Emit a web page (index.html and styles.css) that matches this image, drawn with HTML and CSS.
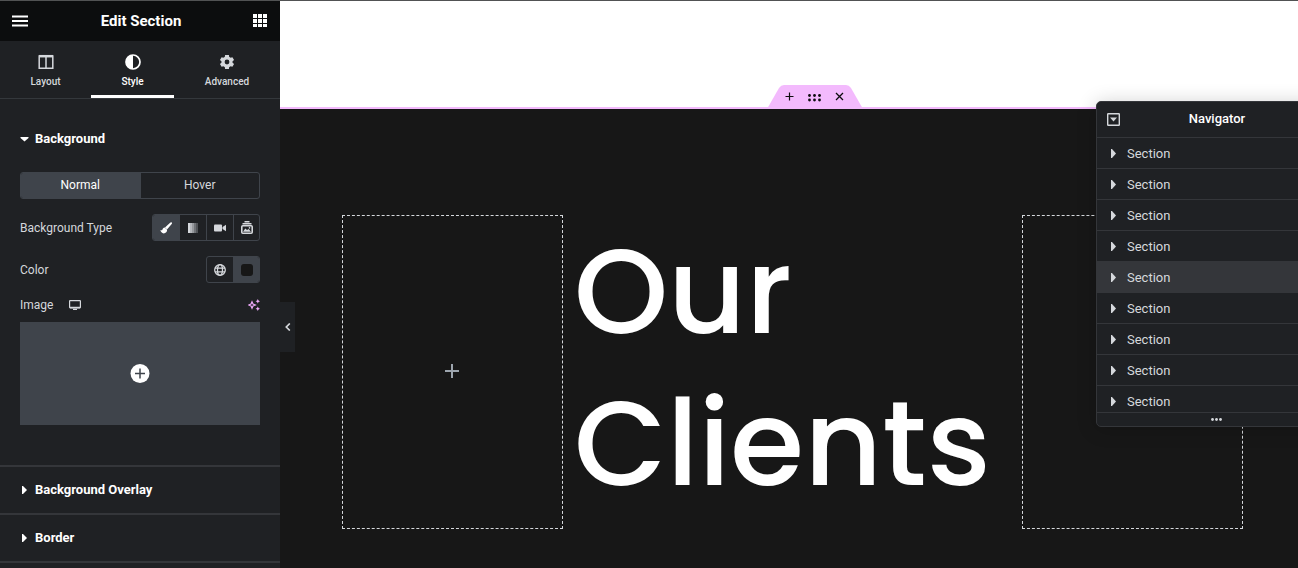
FILE: index.html
```html
<!DOCTYPE html>
<html lang="en">
<head>
    <meta charset="UTF-8">
    <meta name="viewport" content="width=device-width, initial-scale=1.0">
    <title>Edit Section</title>
    <link rel="stylesheet" href="styles.css">
</head>
<body>
    <aside class="panel">
        <header class="panel-header">
            <button type="button" aria-label="Menu">
                <svg width="18" height="14" viewBox="0 0 18 14"><path d="M1 2.500h16M1 7h16M1 11.500h16" stroke="#fff" stroke-width="2.200"/></svg>
            </button>
            <h1>Edit Section</h1>
            <button type="button" aria-label="Widgets">
                <svg width="14" height="14" viewBox="0 0 14 14" fill="#fff"><path d="M0 0h4v4H0zM5 0h4v4H5zM10 0h4v4h-4zM0 5h4v4H0zM5 5h4v4H5zM10 5h4v4h-4zM0 10h4v3H0zM5 10h4v3H5zM10 10h4v3h-4z"/></svg>
            </button>
        </header>

        <nav class="tabs">
            <button type="button" class="tab">
                <svg width="16" height="16" viewBox="0 0 16 16" fill="none" stroke="currentColor"><path d="M1.200 2h13.600v12.200H1.200z" stroke-width="1.500"/><path d="M1 2.200h14" stroke-width="2.500"/><path d="M8 3v11" stroke-width="1.500"/></svg>
                Layout
            </button>
            <button type="button" class="tab active">
                <svg width="16" height="16" viewBox="0 0 16 16"><circle cx="8" cy="8" r="7" fill="none" stroke="currentColor" stroke-width="1.700"/><path d="M8 1a7 7 0 0 0 0 14z" fill="currentColor"/></svg>
                Style
            </button>
            <button type="button" class="tab">
                <svg width="16" height="16" viewBox="0 0 24 24" fill="currentColor"><path d="M20.300 13.200a8 8 0 0 0 0-2.400l2.300-1.800-2.500-4.300-2.700 1.100a8.500 8.500 0 0 0-2.100-1.200L14.900 1.500H9.100l-.4 3.100a8.500 8.500 0 0 0-2.100 1.200L3.900 4.700 1.400 9l2.300 1.800a8 8 0 0 0 0 2.400L1.400 15l2.500 4.300 2.700-1.100a8.500 8.500 0 0 0 2.100 1.200l.4 3.100h5.800l.4-3.100a8.500 8.500 0 0 0 2.100-1.200l2.700 1.100 2.500-4.300zM12 15.600a3.600 3.600 0 1 1 0-7.200 3.600 3.600 0 0 1 0 7.200z"/></svg>
                Advanced
            </button>
        </nav>

        <section class="group open">
            <button type="button" class="group-title" aria-expanded="true"><svg width="9" height="5" viewBox="0 0 9 5" fill="currentColor"><path d="M.5 0h8v1L4.500 4.500.5 1z"/></svg>Background</button>
            <div class="controls">
                <div class="choices states">
                    <button type="button" class="active">Normal</button>
                    <button type="button">Hover</button>
                </div>

                <div class="control">
                    <span class="label">Background Type</span>
                    <div class="choices icons">
                        <button type="button" class="active" aria-label="Classic">
                            <svg width="12" height="12" viewBox="0 0 12 12" fill="#fff"><path d="M11.700.6c-.5-.5-1.100-.3-1.600.2L5 5.400l2 2.200 4.700-5.600c.4-.5.500-1 .1-1.400z"/><path d="M4.700 5.600c-1.300 0-1.900 1.100-2.200 1.900-.3.900-1.100 1-2.200.6.400 1.900 1.700 3.300 3.400 3.300 2.100 0 3.500-1.600 3.400-3.600z"/></svg>
                        </button>
                        <button type="button" aria-label="Gradient">
                            <svg width="12" height="12" viewBox="0 0 12 12"><path d="M1 1h2v10H1z" fill="#d5d8dc"/><path d="M3 1h2v10H3z" fill="#b5b8bc"/><path d="M5 1h2v10H5z" fill="#96999d"/><path d="M7 1h2v10H7z" fill="#707377"/><path d="M9 1h2v10H9z" fill="#505357"/></svg>
                        </button>
                        <button type="button" aria-label="Video">
                            <svg width="12" height="12" viewBox="0 0 12 12" fill="currentColor"><rect y="2.500" width="8" height="7" rx="1"/><path d="M8.500 5L12 2.800v6.400L8.500 7z"/></svg>
                        </button>
                        <button type="button" aria-label="Slideshow">
                            <svg width="12" height="13" viewBox="0 0 12 13" fill="none" stroke="currentColor"><path d="M3.500.8h5M1.500 2.800h9" stroke-width="1.400"/><rect x=".8" y="4.800" width="10.400" height="7.400" rx="1" stroke-width="1.600"/><path d="M2 10.800l2.300-3.300 1.700 1.500 1.700-1 2.300 2.800z" fill="currentColor" stroke="none"/><circle cx="8.500" cy="6.900" r=".8" fill="currentColor" stroke="none"/></svg>
                        </button>
                    </div>
                </div>

                <div class="control">
                    <span class="label">Color</span>
                    <div class="choices icons">
                        <button type="button" aria-label="Global color">
                            <svg width="12" height="12" viewBox="0 0 12 12" fill="none" stroke="currentColor" stroke-width="1.300"><circle cx="6" cy="6" r="5.300"/><ellipse cx="6" cy="6" rx="2.500" ry="5.300"/><path d="M1 4.200h10M1 7.800h10"/></svg>
                        </button>
                        <button type="button" class="active" aria-label="Pick color"><span class="swatch"></span></button>
                    </div>
                </div>

                <div class="control image-control">
                    <span class="label">Image</span>
                    <button type="button" class="device" aria-label="Desktop">
                        <svg width="12" height="10" viewBox="0 0 12 10" fill="none" stroke="currentColor"><rect x=".6" y=".6" width="10.800" height="7.200" rx=".5" stroke-width="1.200"/><path d="M1 7.500h10" stroke-width="1.500"/><path d="M4 9.400h4" stroke-width="1.200"/></svg>
                    </button>
                    <button type="button" class="ai" aria-label="Create with AI">
                        <svg width="12" height="12" viewBox="1 0 12 12" fill="#f0abfc"><path d="M5 2.700l1 2.300 2.300 1L6 7 5 9.300 4 7 1.700 6 4 5z" fill="none" stroke="#f0abfc" stroke-width="1.200"/><path d="M10.800 0l.7 1.500 1.500.7-1.500.7-.7 1.500-.7-1.500-1.500-.7 1.500-.7zM10.800 7.500l.7 1.500 1.500.7-1.500.7-.7 1.500-.7-1.500-1.500-.7 1.500-.7z"/></svg>
                    </button>
                </div>
                <button type="button" class="media" aria-label="Choose image">
                    <svg width="20" height="20" viewBox="0 0 20 20"><circle cx="10" cy="9.500" r="9.500" fill="#fff"/><path d="M10 4.500v10M5 9.500h10" stroke="#3f444b" stroke-width="1.500"/></svg>
                </button>
            </div>
        </section>

        <section class="group">
            <button type="button" class="group-title" aria-expanded="false"><svg width="9" height="8" viewBox="0 0 9 8" fill="currentColor"><path d="M2 0h1l4 4-4 4H2z"/></svg>Background Overlay</button>
        </section>
        <section class="group">
            <button type="button" class="group-title" aria-expanded="false"><svg width="9" height="8" viewBox="0 0 9 8" fill="currentColor"><path d="M2 0h1l4 4-4 4H2z"/></svg>Border</button>
        </section>
        <section class="group"></section>
    </aside>

    <main class="preview">
        <button type="button" class="collapse" aria-label="Hide panel">
            <svg width="6" height="8" viewBox="0 0 6 8" fill="none" stroke="currentColor" stroke-width="1.700"><path d="M4.800.5L1.300 4l3.500 3.500"/></svg>
        </button>
        <div class="page-section">
            <div class="handle">
                <button type="button" aria-label="Add section">
                    <svg width="14" height="12" viewBox="0 0 14 12" fill="none" stroke="currentColor" stroke-width="1.200"><path d="M6.500 1.500v8M2.500 5.500h8"/></svg>
                </button>
                <button type="button" aria-label="Edit section">
                    <svg width="14" height="12" viewBox="0 0 14 12" fill="currentColor"><circle cx="1.500" cy="4.500" r="1.400"/><circle cx="6.500" cy="4.500" r="1.400"/><circle cx="11.500" cy="4.500" r="1.400"/><circle cx="1.500" cy="9" r="1.400"/><circle cx="6.500" cy="9" r="1.400"/><circle cx="11.500" cy="9" r="1.400"/></svg>
                </button>
                <button type="button" aria-label="Delete section">
                    <svg width="14" height="12" viewBox="0 0 14 12" fill="none" stroke="currentColor" stroke-width="1.300"><path d="M3 2l7 7M10 2L3 9"/></svg>
                </button>
            </div>
            <div class="columns">
                <div class="column empty">
                    <button type="button" aria-label="Add widget">
                        <svg width="15" height="16" viewBox="0 0 15 16" stroke="currentColor" stroke-width="2"><path d="M7 0v14M0 7h14"/></svg>
                    </button>
                </div>
                <div class="column"><h2>Our Clients</h2></div>
                <div class="column empty"></div>
            </div>
        </div>
    </main>

    <aside class="navigator">
        <header>
            <button type="button" aria-label="Toggle all">
                <svg width="13" height="13" viewBox="0 0 13 13"><rect x=".7" y=".7" width="11.600" height="11.600" rx=".5" fill="none" stroke="currentColor" stroke-width="1.400"/><path d="M3 4.500h7L6.500 8.500z" fill="currentColor"/></svg>
            </button>
            <h2>Navigator</h2>
        </header>
        <ul>
            <li>Section</li>
            <li>Section</li>
            <li>Section</li>
            <li>Section</li>
            <li class="selected">Section</li>
            <li>Section</li>
            <li>Section</li>
            <li>Section</li>
            <li>Section</li>
        </ul>
        <footer>
            <svg width="11" height="3" viewBox="0 0 11 3" fill="currentColor"><circle cx="1.500" cy="1.500" r="1.400"/><circle cx="5.500" cy="1.500" r="1.400"/><circle cx="9.500" cy="1.500" r="1.400"/></svg>
        </footer>
    </aside>
</body>
</html>
```
FILE: styles.css
```css
*, *:before, *:after {
    box-sizing: border-box;
}
body {
    display: flex;
    position: relative;
    min-height: 100vh;
    margin: 0;
    overflow: hidden;
    border-top: 1px solid #515253;
    background: #fff;
    color: #d5d8dc;
    font-family: Roboto, "Liberation Sans", sans-serif;
    font-size: 12px;
    line-height: 16px;
}
h1, h2, ul {
    margin: 0;
    padding: 0;
}
button {
    padding: 0;
    border: 0;
    background: none;
    color: inherit;
    font: inherit;
    cursor: pointer;
}
svg {
    display: block;
    flex: none;
}

/* left panel */
.panel {
    flex: none;
    width: 280px;
    background: #1f2124;
}
.panel-header {
    display: flex;
    align-items: center;
    justify-content: space-between;
    height: 40px;
    padding: 0 13px 0 11px;
    background: #0c0d0e;
}
.panel-header h1 {
    color: #fff;
    font-size: 15px;
    font-weight: 700;
}
.tabs {
    display: grid;
    grid-template-columns: 91fr 83fr 106fr;
    height: 58px;
    border-bottom: 1px solid #34383c;
}
.tab {
    display: flex;
    flex-direction: column;
    align-items: center;
    gap: 4px;
    padding-top: 13px;
    border-bottom: 3px solid transparent;
    font-size: 10px;
    font-weight: 500;
}
.tab.active {
    border-color: #fff;
    color: #fff;
}
.group {
    border-bottom: 2px solid #34363a;
}
.group.open {
    padding: 17px 0 40px;
}
.group:last-child {
    border: 0;
}
.group-title {
    display: flex;
    align-items: center;
    gap: 6px;
    width: 100%;
    height: 46px;
    padding: 0 20px;
    color: #fff;
    font-size: 13px;
    font-weight: 700;
}
.controls {
    padding: 10px 20px 0;
}
.choices {
    display: flex;
    height: 27px;
    overflow: hidden;
    border: 1px solid #3f444b;
    border-radius: 3px;
}
.choices button {
    display: flex;
    align-items: center;
    justify-content: center;
    border-left: 1px solid #3f444b;
}
.choices button:first-child {
    border-left: 0;
}
.choices .active {
    background: #3f444b;
    color: #fff;
}
.states button {
    flex: 1;
    padding-bottom: 2px;
}
.icons button {
    width: 27px;
}
.icons button:first-child {
    width: 26px;
}
.icons button:last-child {
    width: 26px;
}
.control {
    display: flex;
    align-items: center;
    justify-content: space-between;
    margin-top: 15px;
}
.swatch {
    width: 12px;
    height: 12px;
    border-radius: 3px;
    background: #171717;
}
.image-control {
    margin: 14px 0 9px;
}
.device {
    margin: 0 auto 0 16px;
}
.media {
    display: flex;
    align-items: center;
    justify-content: center;
    width: 100%;
    height: 103px;
    background: #3f444b;
}

/* page preview */
.preview {
    display: flex;
    flex: 1;
    position: relative;
    overflow: hidden;
    padding-top: 106px;
}
.collapse {
    display: flex;
    align-items: center;
    justify-content: center;
    position: absolute;
    top: 301px;
    left: 0;
    z-index: 1;
    width: 15px;
    height: 50px;
    background: #1f2124;
}
.page-section {
    flex: 1;
    position: relative;
    z-index: 0;
    margin-right: -52px;
    padding: 106px 107px 38px 62px;
    border-top: 2px solid #f3bafd;
    background: #171717;
}
.handle {
    display: flex;
    align-items: center;
    justify-content: center;
    gap: 11px;
    position: absolute;
    top: -24px;
    left: calc(50% - 48px);
    width: 96px;
    height: 24px;
    color: #0c0d0e;
}
.handle:before {
    content: "";
    position: absolute;
    inset: 0;
    z-index: -1;
    background: #f3bafd;
    clip-path: path("M0 24L12 3Q14 0 17 0H79Q82 0 84 3L96 24Z");
}
.columns {
    display: grid;
    grid-template-columns: 221fr 459fr 221fr;
    min-height: 314px;
}
.column h2 {
    padding: 0 11px;
    color: #fff;
    font-family: Poppins, Inter, sans-serif;
    font-size: 120px;
    font-weight: 500;
    line-height: 152px;
}
.column.empty {
    display: flex;
    align-items: center;
    justify-content: center;
    border: 1px dashed #d5d8dc;
    color: #9da5ae;
}

/* floating navigator */
.navigator {
    position: absolute;
    top: 100px;
    right: -38px;
    z-index: 1;
    width: 240px;
    overflow: hidden;
    border: 1px solid #34363a;
    border-radius: 5px;
    background: #1f2124;
    box-shadow: 0 2px 20px rgba(0, 0, 0, 0.2);
    font-size: 13px;
}
.navigator header {
    display: grid;
    grid-template-columns: 13px 1fr 11px;
    align-items: center;
    height: 35px;
    padding: 0 10px;
}
.navigator h2 {
    padding-bottom: 2px;
    color: #fff;
    font-size: 13px;
    font-weight: 500;
    line-height: 16px;
    text-align: center;
}
.navigator ul {
    height: 275px;
    overflow: hidden;
    list-style: none;
}
.navigator li {
    display: flex;
    align-items: center;
    gap: 11px;
    height: 31px;
    padding: 1px 0 0 14px;
    border-top: 1px solid #34363a;
}
.navigator li:before {
    content: "";
    width: 5px;
    height: 9px;
    background: #d5d8dc;
    clip-path: polygon(0 0, 20% 0, 100% 50%, 20% 100%, 0 100%);
}
.navigator li.selected {
    background: #34363a;
}
.navigator footer {
    display: flex;
    align-items: center;
    justify-content: center;
    height: 14px;
    border-top: 1px solid #34363a;
}
```
